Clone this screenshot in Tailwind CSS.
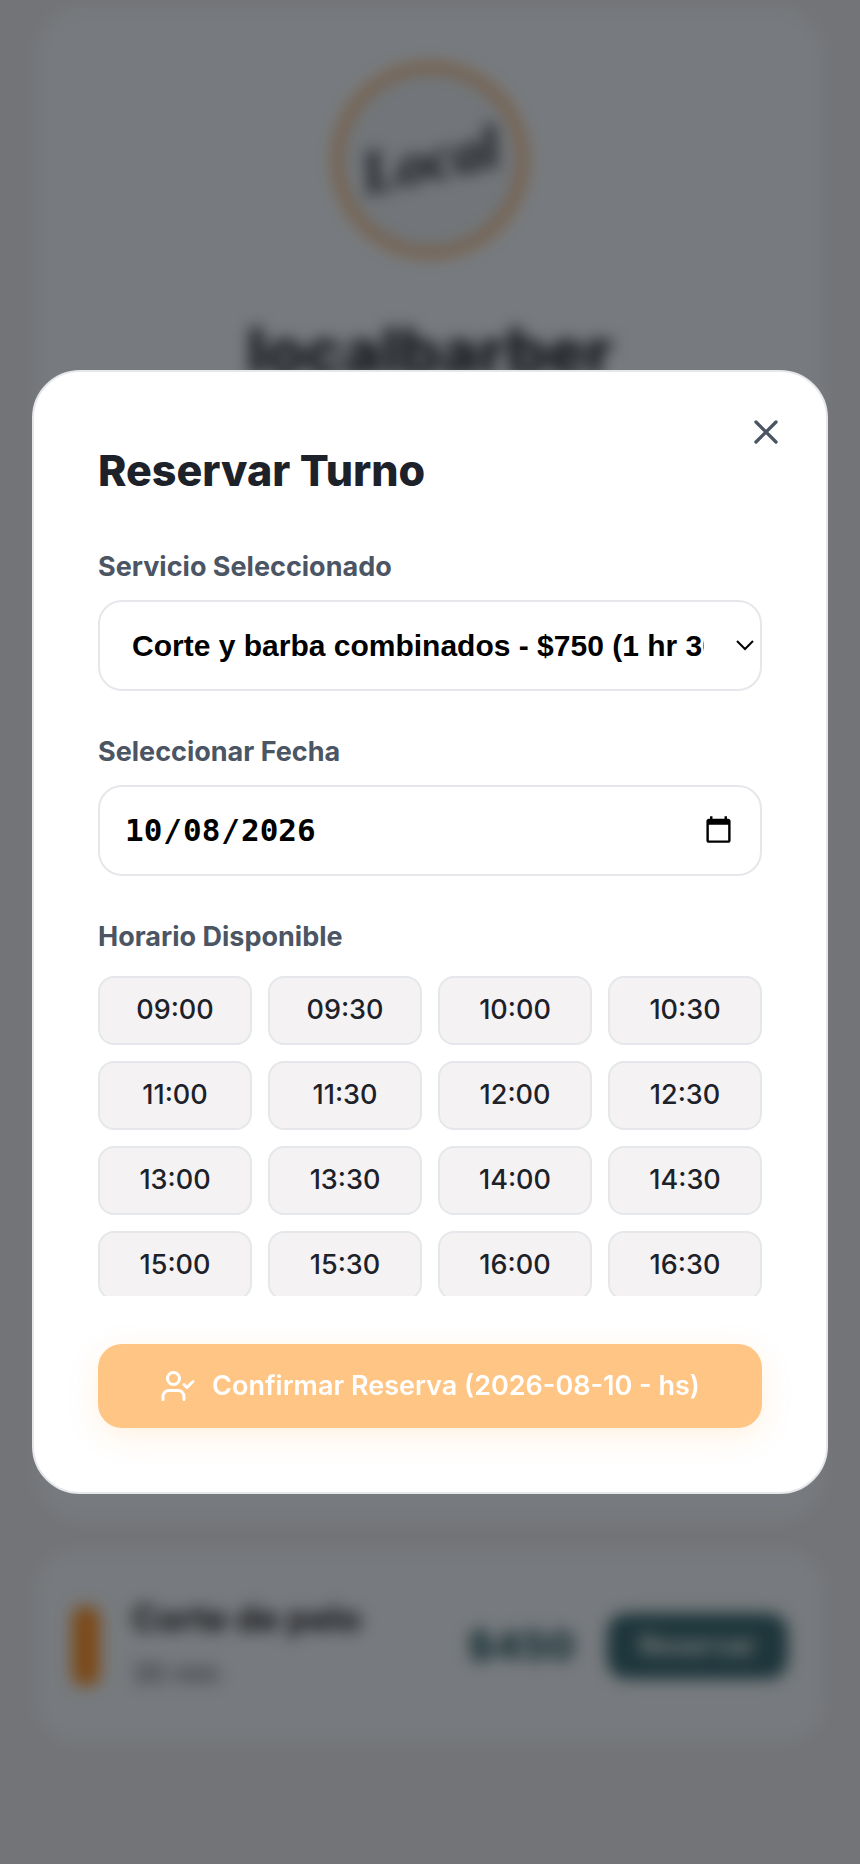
<!DOCTYPE html>
<html lang="es">
  <head>
    <meta charset="UTF-8" />
    <meta name="viewport" content="width=device-width, initial-scale=1.0" />
    <title>Reservar Turno - localbarber</title>
    <script src="https://cdn.jsdelivr.net/npm/@tailwindcss/browser@4"></script>
  </head>
  <body class="bg-[#e6e8f0] font-['Inter',sans-serif] text-[#1d2129]">
    <!-- Barber page -->
    <main class="min-h-screen overflow-hidden px-9 pt-2 pb-30" inert>
      <section class="flex min-h-[1514px] flex-col items-center rounded-[48px] bg-[#eef5fc] pt-14">
        <div class="flex size-48 items-center justify-center rounded-full border-6 border-[#f29a45] bg-[#e4ebf2]">
          <span class="-rotate-12 text-[60px] leading-none font-bold italic font-['Liberation_Serif',serif]">Local</span>
        </div>
        <h1 class="mt-12 text-[64px] leading-[96px] font-extrabold">localbarber</h1>
      </section>

      <section class="mt-7 flex items-center rounded-[40px] bg-[#eef5fc] px-9 py-10">
        <div class="h-20 w-7 rounded-xl bg-[#f79433]"></div>
        <div class="ml-8 flex-1">
          <h2 class="text-[35px] leading-[56px] font-bold">Corte de pelo</h2>
          <p class="text-[27px] leading-[56px] text-[#4b5563]">30 min</p>
        </div>
        <span class="text-[40px] font-extrabold text-[#2d5f6b]">$450</span>
        <button class="ml-8 h-[66px] rounded-[20px] bg-[#3b6c77] px-8 text-[27px] font-semibold text-white">Reservar</button>
      </section>
    </main>

    <!-- Booking modal -->
    <div class="fixed inset-0 flex items-center justify-center bg-black/50 p-8 backdrop-blur-sm">
      <div role="dialog" aria-labelledby="modal-title" class="relative w-full rounded-[48px] border-2 border-[#e5e7eb] bg-white p-16">
        <button id="close" aria-label="Cerrar" class="absolute top-6 right-6 p-4 text-[#4b5563]">
          <svg class="size-10" viewBox="0 0 24 24" fill="none" stroke="currentColor" stroke-width="2" stroke-linecap="round" stroke-linejoin="round">
            <path d="M18 6 6 18" />
            <path d="m6 6 12 12" />
          </svg>
        </button>

        <h2 id="modal-title" class="mb-[42px] text-[43px] leading-[68px] font-extrabold">Reservar Turno</h2>

        <form>
          <div class="mb-10">
            <label for="service" class="mb-3 block text-[27px] leading-[42px] font-bold text-[#4b5563]">Servicio Seleccionado</label>
            <div class="relative">
              <select id="service" class="block h-[91px] w-full appearance-none rounded-[24px] border-2 border-[#e5e7eb] bg-white pr-14 pl-8 text-[30px] font-bold text-black font-['Liberation_Sans',sans-serif]">
                <option>Corte y barba combinados - $750 (1 hr 30 min)</option>
                <option>Corte de pelo - $450 (30 min)</option>
              </select>
              <svg class="pointer-events-none absolute top-9 right-2 h-5 w-[18px]" viewBox="0 0 18 20" fill="none" stroke="black" stroke-width="2">
                <path d="M1 5l8 8 8-8" />
              </svg>
            </div>
          </div>

          <div class="mb-10">
            <label for="date" class="mb-3 block text-[27px] leading-[42px] font-bold text-[#4b5563]">Seleccionar Fecha</label>
            <input id="date" type="date" value="2026-10-08" class="block h-[91px] w-full rounded-[24px] border-2 border-[#e5e7eb] bg-white px-6 text-[31px] font-bold text-black font-['DejaVu_Sans_Mono',monospace]" />
          </div>

          <p id="slots-label" class="mb-[18px] text-[27px] leading-[42px] font-bold text-[#4b5563]">Horario Disponible</p>
          <div id="slots" role="group" aria-labelledby="slots-label" class="mb-12 grid max-h-80 grid-cols-4 gap-4 overflow-y-auto [scrollbar-width:none]"></div>

          <button
            type="submit"
            disabled
            class="flex h-[84px] w-full items-center justify-center gap-4 rounded-[24px] bg-[#ff8c0a] text-[27px] font-semibold text-white opacity-50 shadow-[0_8px_32px_rgba(255,143,12,0.25)]"
          >
            <svg class="size-9" viewBox="0 0 24 24" fill="none" stroke="currentColor" stroke-width="2" stroke-linecap="round" stroke-linejoin="round">
              <path d="M16 21v-2a4 4 0 0 0-4-4H6a4 4 0 0 0-4 4v2" />
              <circle cx="9" cy="7" r="4" />
              <path d="m16 11 2 2 4-4" />
            </svg>
            Confirmar Reserva (2026-08-10 - hs)
          </button>
        </form>
      </div>
    </div>

    <script>
      // Half-hour slots from 09:00 to 16:30
      const slots = document.getElementById("slots");
      for (let hour = 9; hour < 17; hour++) {
        ["00", "30"].forEach((minutes) => {
          const slot = document.createElement("button");
          slot.type = "button";
          slot.className =
            "h-[69px] rounded-2xl border-2 border-[#e5e7eb] bg-[#f4f2f3] text-[27px] font-medium";
          slot.textContent = `${String(hour).padStart(2, "0")}:${minutes}`;
          slots.appendChild(slot);
        });
      }
    </script>
  </body>
</html>
